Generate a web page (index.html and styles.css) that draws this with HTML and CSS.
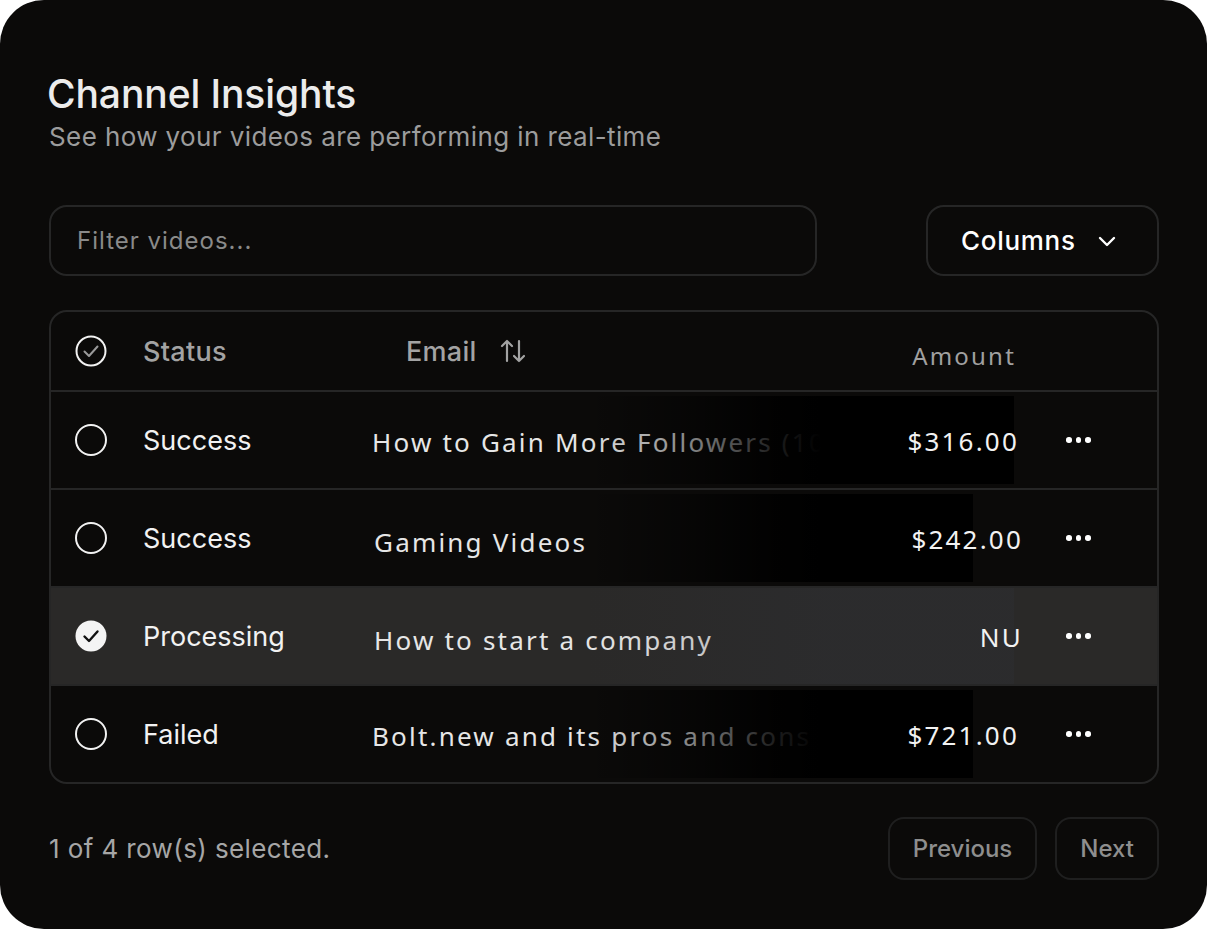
FILE: index.html
```html
<!DOCTYPE html>
<html lang="en">
<head>
<meta charset="utf-8">
<title>Channel Insights</title>
<link rel="stylesheet" href="styles.css">
</head>
<body>
<div class="card">
  <header class="head">
    <h1 class="title">Channel Insights</h1>
    <p class="subtitle">See how your videos are performing in real-time</p>
  </header>

  <div class="toolbar">
    <div class="filter">Filter videos...</div>
    <button class="columns-btn">Columns
      <svg class="chev" width="18" height="12" viewBox="0 0 18 12"><path d="M2 2 L9 9 L16 2" fill="none" stroke="#fff" stroke-width="2.4" stroke-linecap="round" stroke-linejoin="round"/></svg>
    </button>
  </div>

  <div class="table">
    <div class="row row-head">
      <div class="cell cell-check">
        <svg width="32" height="32" viewBox="0 0 32 32"><circle cx="16" cy="16" r="14.5" fill="none" stroke="#f2f2f2" stroke-width="2"/><path d="M9.5 16.5 L14 21 L22.5 11.5" fill="none" stroke="#9a9a9a" stroke-width="2" stroke-linecap="round" stroke-linejoin="round"/></svg>
      </div>
      <div class="cell cell-status head-text">Status</div>
      <div class="cell cell-email head-email head-text">Email
        <svg class="sort" width="28" height="28" viewBox="0 0 28 28"><path d="M8 24 V4 M3 9 L8 4 L13 9" fill="none" stroke="#a3a3a3" stroke-width="2.2" stroke-linecap="round" stroke-linejoin="round"/><path d="M20 4 V24 M15 19 L20 24 L25 19" fill="none" stroke="#a3a3a3" stroke-width="2.2" stroke-linecap="round" stroke-linejoin="round"/></svg>
      </div>
      <div class="cell cell-amount head-amount">Amount</div>
      <div class="cell cell-action"></div>
    </div>

    <div class="row">
      <div class="cell cell-check"><span class="radio"></span></div>
      <div class="cell cell-status">Success</div>
      <div class="cell cell-email"><span class="email-text">How to Gain More Followers (100k+)</span></div>
      <div class="shade shade-long"></div>
      <div class="cell cell-amount">$316.00</div>
      <div class="cell cell-action"><span class="dots"><i></i><i></i><i></i></span></div>
    </div>

    <div class="row">
      <div class="cell cell-check"><span class="radio"></span></div>
      <div class="cell cell-status">Success</div>
      <div class="cell cell-email"><span class="email-text email-low">Gaming Videos</span></div>
      <div class="shade shade-short"></div>
      <div class="cell cell-amount amount-wide">$242.00</div>
      <div class="cell cell-action"><span class="dots"><i></i><i></i><i></i></span></div>
    </div>

    <div class="row row-selected">
      <div class="cell cell-check">
        <svg width="32" height="32" viewBox="0 0 32 32"><circle cx="16" cy="16" r="15.5" fill="#f4f4f4"/><path d="M9.5 16.5 L14 21 L22.5 11.5" fill="none" stroke="#111" stroke-width="2.4" stroke-linecap="round" stroke-linejoin="round"/></svg>
      </div>
      <div class="cell cell-status">Processing</div>
      <div class="cell cell-email"><span class="email-text email-low">How to start a company</span></div>
      <div class="shade shade-sel"></div>
      <div class="cell cell-amount amount-wide">NU</div>
      <div class="cell cell-action"><span class="dots"><i></i><i></i><i></i></span></div>
    </div>

    <div class="row">
      <div class="cell cell-check"><span class="radio"></span></div>
      <div class="cell cell-status">Failed</div>
      <div class="cell cell-email"><span class="email-text">Bolt.new and its pros and cons</span></div>
      <div class="shade shade-short"></div>
      <div class="cell cell-amount">$721.00</div>
      <div class="cell cell-action"><span class="dots"><i></i><i></i><i></i></span></div>
    </div>
  </div>

  <footer class="foot">
    <span class="selected-count">1 of 4 row(s) selected.</span>
    <div class="pager">
      <button class="page-btn">Previous</button>
      <button class="page-btn">Next</button>
    </div>
  </footer>
</div>
</body>
</html>
```

FILE: styles.css
```css
* { box-sizing: border-box; }

html, body {
  margin: 0;
  padding: 0;
  background: #ffffff;
}

body {
  font-family: Inter, "Liberation Sans", Arial, sans-serif;
  color: #f0f0f0;
}

.card {
  width: 1207px;
  height: 929px;
  background: #0b0a09;
  border-radius: 44px;
  padding: 71px 48px 0 49px;
  display: flex;
  flex-direction: column;
}

.title {
  margin: 0 0 0 -2px;
  font-size: 39px;
  line-height: 45px;
  font-weight: 500;
  color: #ececec;
  letter-spacing: -0.1px;
}

.subtitle {
  margin: 5px 0 0 0;
  font-size: 26px;
  line-height: 32px;
  color: #9c9c9c;
  font-weight: 400;
  letter-spacing: 0.4px;
}

.toolbar {
  margin-top: 52px;
  display: flex;
  justify-content: space-between;
  align-items: center;
}

.filter {
  width: 768px;
  height: 71px;
  border: 2px solid #262626;
  border-radius: 18px;
  display: flex;
  align-items: center;
  padding-left: 26px;
  font-size: 24px;
  color: #8a8a8a;
  letter-spacing: 1px;
}

.columns-btn {
  width: 233px;
  height: 71px;
  border: 2px solid #262626;
  border-radius: 18px;
  background: transparent;
  color: #ffffff;
  font-family: inherit;
  font-size: 26px;
  font-weight: 500;
  letter-spacing: 0.7px;
  display: flex;
  align-items: center;
  justify-content: flex-start;
  padding-left: 33px;
  gap: 22px;
}

.chev { margin-top: 2px; }

.table {
  margin-top: 34px;
  border: 2px solid #262626;
  border-radius: 18px;
  overflow: hidden;
  display: flex;
  flex-direction: column;
}

.row {
  position: relative;
  display: flex;
  align-items: center;
  height: 98px;
  border-top: 2px solid #262626;
  font-size: 27px;
}

.row-head {
  height: 78px;
  border-top: none;
}

.row-selected {
  background: #2a2928;
}

.cell {
  position: relative;
  z-index: 1;
}

.cell-check {
  width: 92px;
  padding-left: 24px;
  display: flex;
  align-items: center;
}

.radio {
  display: block;
  width: 32px;
  height: 32px;
  border: 2px solid #f2f2f2;
  border-radius: 50%;
}

.cell-status {
  width: 228px;
  color: #f2f2f2;
  font-weight: 400;
  letter-spacing: 0;
}

.head-text {
  color: #a3a3a3;
  font-weight: 500;
  letter-spacing: 0.3px;
}

.cell-email {
  flex: 1;
  min-width: 0;
  white-space: nowrap;
  overflow: hidden;
  z-index: 0;
}

.head-email {
  padding-left: 35px;
  display: flex;
  align-items: center;
  gap: 22px;
  overflow: visible;
}

.email-text {
  font-family: "Noto Sans", "Open Sans", sans-serif;
  font-size: 26px;
  letter-spacing: 2.2px;
  color: #e6e6e6;
  display: inline-block;
  padding-top: 4px;
  padding-left: 1px;
}

.email-low { padding-top: 8px; padding-left: 3px; }

.cell-amount {
  font-family: "Noto Sans", "Open Sans", sans-serif;
  font-size: 26px;
  letter-spacing: 2.2px;
  color: #f2f2f2;
  text-align: right;
  white-space: nowrap;
  padding-top: 2px;
}

.amount-wide { margin-right: -4px; }

.head-amount {
  color: #a0a0a0;
  letter-spacing: 2.2px;
  font-size: 24px;
  padding-top: 8px;
  margin-right: 3px;
}

.cell-action {
  width: 138px;
  display: flex;
  align-items: center;
  padding-left: 47px;
}

.dots {
  display: flex;
  gap: 4px;
}

.dots i {
  display: block;
  width: 5.5px;
  height: 5.5px;
  border-radius: 50%;
  background: #ffffff;
}

.shade {
  position: absolute;
  top: 4px;
  bottom: 4px;
  left: 535px;
  background: linear-gradient(90deg, rgba(0,0,0,0) 0, rgba(0,0,0,0.45) 110px, rgba(0,0,0,0.88) 190px, #000 235px);
  z-index: 0;
}

.shade-long { right: 143px; }
.shade-short { right: 184px; }

.shade-sel {
  right: 143px;
  top: 0;
  bottom: 0;
  background: linear-gradient(90deg, rgba(46,48,54,0) 0, rgba(46,48,54,0.35) 240px);
}

.foot {
  margin-top: 33px;
  display: flex;
  justify-content: space-between;
  align-items: center;
}

.selected-count {
  font-size: 26px;
  color: #a6a6a6;
  letter-spacing: 0.4px;
}

.pager {
  display: flex;
  gap: 18px;
}

.page-btn {
  height: 63px;
  border: 2px solid #1f1f1f;
  border-radius: 16px;
  background: transparent;
  color: #8e8e8e;
  font-family: inherit;
  font-size: 24px;
  font-weight: 500;
  padding: 0 23px;
}
```
